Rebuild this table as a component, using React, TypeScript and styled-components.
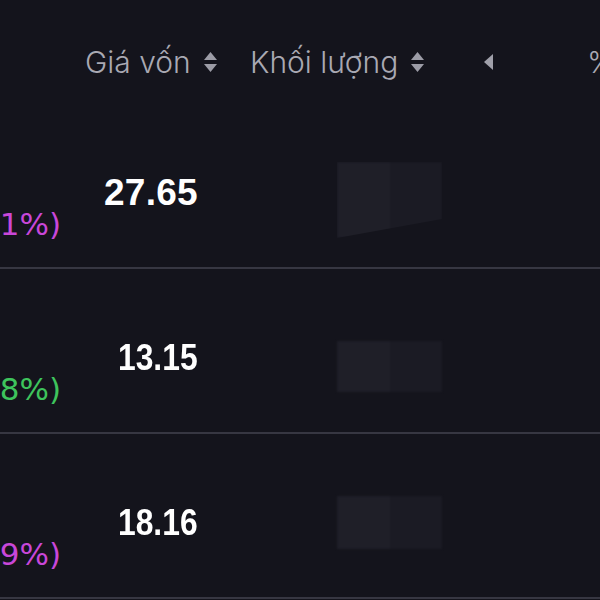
import React from "react";
import styled, { createGlobalStyle, css } from "styled-components";

const Global = createGlobalStyle`
  html, body {
    margin: 0;
    padding: 0;
    background: #14141c;
    overflow: hidden;
  }
  body {
    font-family: "Liberation Sans", Arial, sans-serif;
  }
`;

const Table = styled.div`
  width: 600px;
  height: 600px;
  background: #14141c;
  display: grid;
  grid-template-columns: 75px 155px 240px 60px 1fr;
  grid-template-rows: 104px repeat(3, 165px) 1fr;
  overflow: hidden;
`;

const HeadCell = styled.div<{ $pl?: number }>`
  display: flex;
  align-items: center;
  padding-top: 20px;
  padding-left: ${(p) => p.$pl ?? 0}px;
  gap: 12px;
  color: #a9a9b3;
  font-family: "Inter", "Liberation Sans", sans-serif;
  font-weight: 300;
  font-size: 30px;
  white-space: nowrap;
  box-sizing: border-box;
`;

const Cell = styled.div`
  border-bottom: 2px solid #373742;
  box-sizing: border-box;
  display: flex;
  min-width: 0;
`;

const ChangeCell = styled(Cell)`
  justify-content: flex-end;
  padding-right: 14px;
`;

const ChangeStack = styled.div`
  display: flex;
  flex-direction: column;
  align-items: flex-start;
  flex-shrink: 0;
  padding-top: 62px;
  gap: 10px;
  white-space: nowrap;
  font-family: "DejaVu Sans", "Liberation Sans", sans-serif;
  font-size: 31px;
  line-height: 32px;
`;

const Price = styled.span`
  color: #ffffff;
  font-weight: 600;
`;

const Change = styled.span<{ $up: boolean }>`
  color: ${(p) => (p.$up ? "#3ec45c" : "#c947d9")};
`;

const CostCell = styled(Cell)`
  justify-content: flex-end;
  padding-right: 32px;
  padding-top: 70px;
`;

const CostValue = styled.span<{ $narrow?: boolean }>`
  display: inline-block;
  color: #ffffff;
  font-family: "Liberation Sans", Arial, sans-serif;
  font-weight: 700;
  font-size: 37px;
  line-height: 37px;
  height: 37px;
  ${(p) =>
    p.$narrow
      ? css`
          transform: scaleX(0.86);
          transform-origin: right center;
        `
      : css`
          letter-spacing: 0.3px;
        `}
`;

const VolumeCell = styled(Cell)<{ $top: number }>`
  padding-left: 107px;
  padding-top: ${(p) => p.$top}px;
  align-items: flex-start;
`;

const Redact = styled.div<{ $h: number; $skew?: boolean }>`
  display: flex;
  width: 105px;
  height: ${(p) => p.$h}px;
  filter: blur(0.8px);
  ${(p) =>
    p.$skew &&
    css`
      clip-path: polygon(0 0, 100% 0, 100% 75%, 0 100%);
    `}
`;

const RedactHalf = styled.div<{ $tone: string }>`
  flex: 1;
  background: ${(p) => p.$tone};
`;

const Arrow = styled.svg`
  display: block;
  flex-shrink: 0;
`;

const SortIcon = () => (
  <Arrow width="15" height="22" viewBox="0 0 15 22">
    <polygon points="7.5,1 14,9 1,9" fill="#9c9ca6" />
    <polygon points="1,13 14,13 7.5,21" fill="#9c9ca6" />
  </Arrow>
);

const CaretLeft = () => (
  <Arrow width="11" height="18" viewBox="0 0 11 18">
    <polygon points="10,1 10,17 1,9" fill="#a0a0aa" />
  </Arrow>
);

type Row = {
  price: string;
  change: string;
  up: boolean;
  cost: string;
  narrow: boolean;
  redactTop: number;
  redactH: number;
  skew: boolean;
};

const rows: Row[] = [
  { price: "27.48", change: "-0.17 (-0.61%)", up: false, cost: "27.65", narrow: false, redactTop: 58, redactH: 76, skew: true },
  { price: "13.25", change: "+0.10 (+0.68%)", up: true, cost: "13.15", narrow: true, redactTop: 72, redactH: 51, skew: false },
  { price: "18.05", change: "-0.11 (-0.59%)", up: false, cost: "18.16", narrow: true, redactTop: 62, redactH: 53, skew: false },
];

export default function App() {
  return (
    <>
      <Global />
      <Table>
        <HeadCell />
        <HeadCell $pl={10}>
          <span>Giá vốn</span>
          <SortIcon />
        </HeadCell>
        <HeadCell $pl={20}>
          <span>Khối lượng</span>
          <SortIcon />
        </HeadCell>
        <HeadCell $pl={13}>
          <CaretLeft />
        </HeadCell>
        <HeadCell $pl={57}>
          <span>% Lãi/lỗ</span>
        </HeadCell>

        {rows.map((r) => (
          <React.Fragment key={r.cost}>
            <ChangeCell>
              <ChangeStack>
                <Price>{r.price}</Price>
                <Change $up={r.up}>{r.change}</Change>
              </ChangeStack>
            </ChangeCell>
            <CostCell>
              <CostValue $narrow={r.narrow}>{r.cost}</CostValue>
            </CostCell>
            <VolumeCell $top={r.redactTop}>
              <Redact $h={r.redactH} $skew={r.skew}>
                <RedactHalf $tone="#1f1f28" />
                <RedactHalf $tone="#1b1b24" />
              </Redact>
            </VolumeCell>
            <Cell />
            <Cell />
          </React.Fragment>
        ))}
      </Table>
    </>
  );
}
